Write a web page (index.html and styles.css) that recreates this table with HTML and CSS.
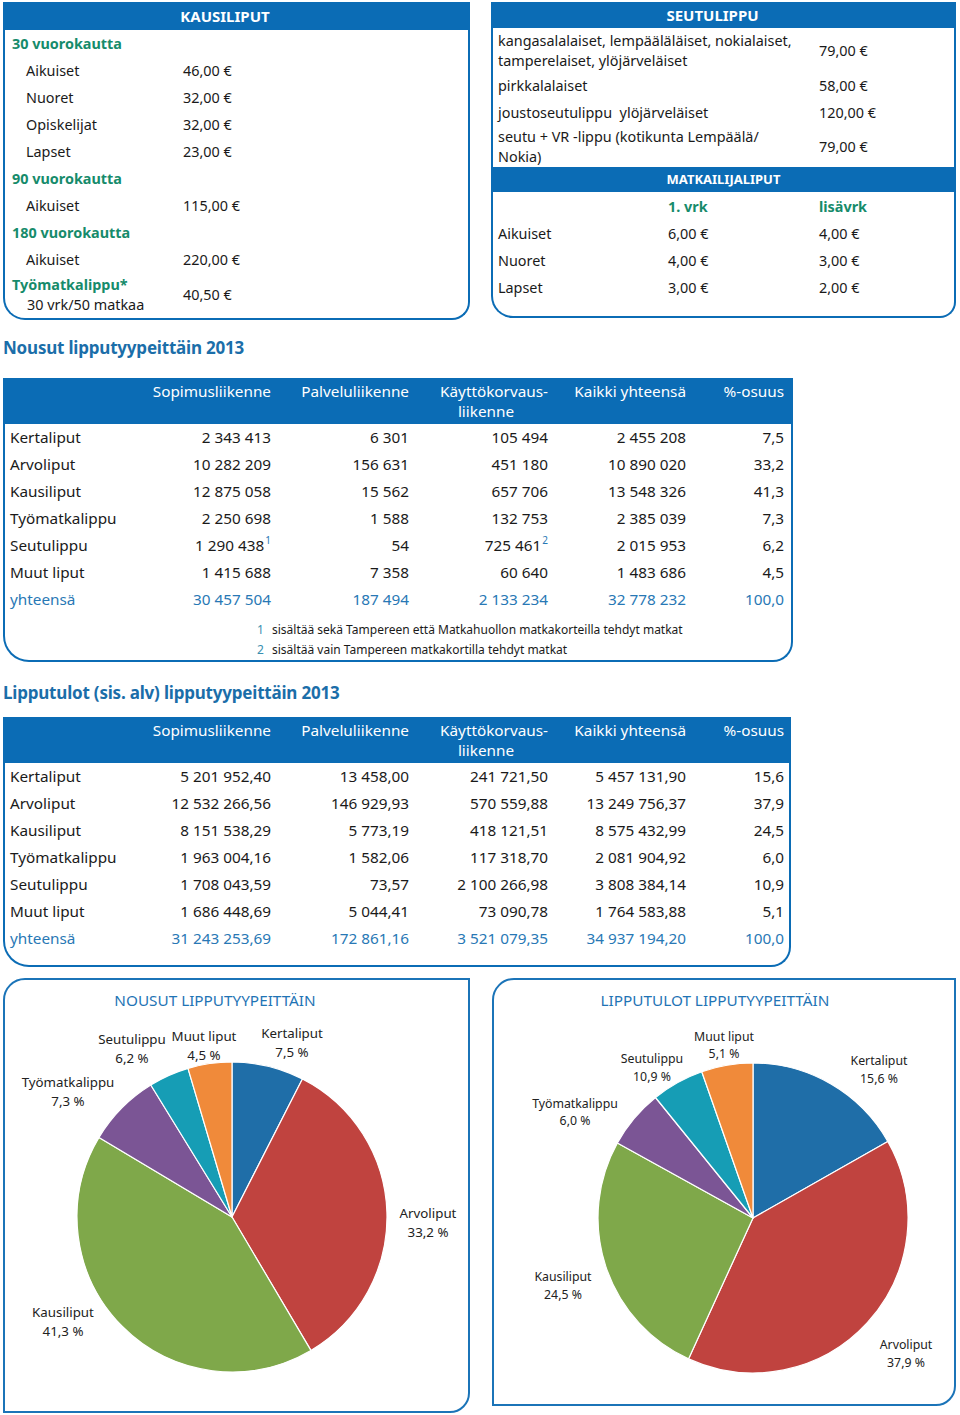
FILE: index.html
```html
<!DOCTYPE html>
<html lang="fi">
<head>
<meta charset="utf-8">
<title>Liput ja lipputulot 2013</title>
<link rel="stylesheet" href="styles.css">
</head>
<body>
<div class="page">

  <div class="top">
    <section class="box box-kausi">
      <h2 class="bar bar-kausi">KAUSILIPUT</h2>
      <div class="grp">30 vuorokautta</div>
      <div class="row"><span class="lbl">Aikuiset</span><span>46,00 €</span></div>
      <div class="row"><span class="lbl">Nuoret</span><span>32,00 €</span></div>
      <div class="row"><span class="lbl">Opiskelijat</span><span>32,00 €</span></div>
      <div class="row"><span class="lbl">Lapset</span><span>23,00 €</span></div>
      <div class="grp">90 vuorokautta</div>
      <div class="row"><span class="lbl">Aikuiset</span><span>115,00 €</span></div>
      <div class="grp">180 vuorokautta</div>
      <div class="row"><span class="lbl">Aikuiset</span><span>220,00 €</span></div>
      <div class="row row-last">
        <span class="stack"><span class="grp-in">Työmatkalippu*</span><span class="sub">30 vrk/50 matkaa</span></span>
        <span>40,50 €</span>
      </div>
    </section>

    <section class="box box-seutu">
      <h2 class="bar bar-seutu">SEUTULIPPU</h2>
      <div class="srow srow-a"><span>kangasalalaiset, lempääläläiset, nokialaiset,<br>tamperelaiset, ylöjärveläiset</span><span class="sval">79,00 €</span></div>
      <div class="srow"><span>pirkkalalaiset</span><span>58,00 €</span></div>
      <div class="srow"><span>joustoseutulippu&nbsp; ylöjärveläiset</span><span>120,00 €</span></div>
      <div class="srow srow-b"><span>seutu + VR -lippu (kotikunta Lempäälä/<br>Nokia)</span><span class="sval">79,00 €</span></div>
      <h3 class="bar bar-matk">MATKAILIJALIPUT</h3>
      <div class="mrow mhead"><span></span><span>1. vrk</span><span>lisävrk</span></div>
      <div class="mrow"><span>Aikuiset</span><span>6,00 €</span><span>4,00 €</span></div>
      <div class="mrow"><span>Nuoret</span><span>4,00 €</span><span>3,00 €</span></div>
      <div class="mrow"><span>Lapset</span><span>3,00 €</span><span>2,00 €</span></div>
    </section>
  </div>

  <h2 class="title title-1">Nousut lipputyypeittäin 2013</h2>
  <div class="tbl tbl-1">
    <div class="tr thead">
      <span></span>
      <span>Sopimusliikenne</span>
      <span>Palveluliikenne</span>
      <span class="kk">Käyttökorvaus-<br><span class="kk2">liikenne</span></span>
      <span>Kaikki yhteensä</span>
      <span>%-osuus</span>
    </div>
    <div class="tr"><span>Kertaliput</span><span>2 343 413</span><span>6 301</span><span>105 494</span><span>2 455 208</span><span>7,5</span></div>
    <div class="tr"><span>Arvoliput</span><span>10 282 209</span><span>156 631</span><span>451 180</span><span>10 890 020</span><span>33,2</span></div>
    <div class="tr"><span>Kausiliput</span><span>12 875 058</span><span>15 562</span><span>657 706</span><span>13 548 326</span><span>41,3</span></div>
    <div class="tr"><span>Työmatkalippu</span><span>2 250 698</span><span>1 588</span><span>132 753</span><span>2 385 039</span><span>7,3</span></div>
    <div class="tr"><span>Seutulippu</span><span>1 290 438<sup>1</sup></span><span>54</span><span>725 461<sup>2</sup></span><span>2 015 953</span><span>6,2</span></div>
    <div class="tr"><span>Muut liput</span><span>1 415 688</span><span>7 358</span><span>60 640</span><span>1 483 686</span><span>4,5</span></div>
    <div class="tr total"><span>yhteensä</span><span>30 457 504</span><span>187 494</span><span>2 133 234</span><span>32 778 232</span><span>100,0</span></div>
    <div class="notes">
      <p><span class="nn">1</span>sisältää sekä Tampereen että Matkahuollon matkakorteilla tehdyt matkat</p>
      <p><span class="nn">2</span>sisältää vain Tampereen matkakortilla tehdyt matkat</p>
    </div>
  </div>

  <h2 class="title title-2">Lipputulot (sis. alv) lipputyypeittäin 2013</h2>
  <div class="tbl tbl-2">
    <div class="tr thead">
      <span></span>
      <span>Sopimusliikenne</span>
      <span>Palveluliikenne</span>
      <span class="kk">Käyttökorvaus-<br><span class="kk2">liikenne</span></span>
      <span>Kaikki yhteensä</span>
      <span>%-osuus</span>
    </div>
    <div class="tr"><span>Kertaliput</span><span>5 201 952,40</span><span>13 458,00</span><span>241 721,50</span><span>5 457 131,90</span><span>15,6</span></div>
    <div class="tr"><span>Arvoliput</span><span>12 532 266,56</span><span>146 929,93</span><span>570 559,88</span><span>13 249 756,37</span><span>37,9</span></div>
    <div class="tr"><span>Kausiliput</span><span>8 151 538,29</span><span>5 773,19</span><span>418 121,51</span><span>8 575 432,99</span><span>24,5</span></div>
    <div class="tr"><span>Työmatkalippu</span><span>1 963 004,16</span><span>1 582,06</span><span>117 318,70</span><span>2 081 904,92</span><span>6,0</span></div>
    <div class="tr"><span>Seutulippu</span><span>1 708 043,59</span><span>73,57</span><span>2 100 266,98</span><span>3 808 384,14</span><span>10,9</span></div>
    <div class="tr"><span>Muut liput</span><span>1 686 448,69</span><span>5 044,41</span><span>73 090,78</span><span>1 764 583,88</span><span>5,1</span></div>
    <div class="tr total"><span>yhteensä</span><span>31 243 253,69</span><span>172 861,16</span><span>3 521 079,35</span><span>34 937 194,20</span><span>100,0</span></div>
  </div>

  <div class="charts">
    <section class="chart chart-1">
      <svg class="pie" width="463" height="431" viewBox="0 0 463 431">
        <text class="ctitle" x="210" y="20">NOUSUT LIPPUTYYPEITTÄIN</text>
        <g class="slices">
          <path fill="#1f6ea8" d="M227,237 L227,82 A155,155 0 0 1 297.4,98.9 Z"/>
          <path fill="#c0433f" d="M227,237 L297.4,98.9 A155,155 0 0 1 305.9,370.4 Z"/>
          <path fill="#7fa84a" d="M227,237 L305.9,370.4 A155,155 0 0 1 94.0,157.4 Z"/>
          <path fill="#7b5595" d="M227,237 L94.0,157.4 A155,155 0 0 1 145.8,105.0 Z"/>
          <path fill="#169db5" d="M227,237 L145.8,105.0 A155,155 0 0 1 183.0,88.4 Z"/>
          <path fill="#f08a3a" d="M227,237 L183.0,88.4 A155,155 0 0 1 227,82 Z"/>
        </g>
        <g class="lbl1">
          <text x="127" y="59">Seutulippu</text><text x="127" y="78">6,2 %</text>
          <text x="199" y="56">Muut liput</text><text x="199" y="75">4,5 %</text>
          <text x="287" y="53">Kertaliput</text><text x="287" y="72">7,5 %</text>
          <text x="63" y="102">Työmatkalippu</text><text x="63" y="121">7,3 %</text>
          <text x="423" y="233">Arvoliput</text><text x="423" y="252">33,2 %</text>
          <text x="58" y="332">Kausiliput</text><text x="58" y="351">41,3 %</text>
        </g>
      </svg>
    </section>
    <section class="chart chart-2">
      <svg class="pie" width="460" height="424" viewBox="0 0 460 424">
        <text class="ctitle" x="221" y="20">LIPPUTULOT LIPPUTYYPEITTÄIN</text>
        <g class="slices">
          <path fill="#1f6ea8" d="M259,238 L259,83 A155,155 0 0 1 393.8,161.4 Z"/>
          <path fill="#c0433f" d="M259,238 L393.8,161.4 A155,155 0 0 1 194.5,378.9 Z"/>
          <path fill="#7fa84a" d="M259,238 L194.5,378.9 A155,155 0 0 1 123.4,162.9 Z"/>
          <path fill="#7b5595" d="M259,238 L123.4,162.9 A155,155 0 0 1 161.5,117.5 Z"/>
          <path fill="#169db5" d="M259,238 L161.5,117.5 A155,155 0 0 1 207.8,91.7 Z"/>
          <path fill="#f08a3a" d="M259,238 L207.8,91.7 A155,155 0 0 1 259,83 Z"/>
        </g>
        <g class="lbl2">
          <text x="230" y="56">Muut liput</text><text x="230" y="73">5,1 %</text>
          <text x="158" y="78">Seutulippu</text><text x="158" y="96">10,9 %</text>
          <text x="385" y="80">Kertaliput</text><text x="385" y="98">15,6 %</text>
          <text x="81" y="123">Työmatkalippu</text><text x="81" y="140">6,0 %</text>
          <text x="69" y="296">Kausiliput</text><text x="69" y="314">24,5 %</text>
          <text x="412" y="364">Arvoliput</text><text x="412" y="382">37,9 %</text>
        </g>
      </svg>
    </section>
  </div>

</div>
</body>
</html>
```

FILE: styles.css
```css
* {
  box-sizing: border-box;
  margin: 0;
  padding: 0;
}

body {
  margin: 0;
  width: 960px;
  height: 1415px;
  overflow: hidden;
  background: #ffffff;
  color: #1a1a1a;
  font-family: "Noto Sans", "Open Sans", sans-serif;
  font-size: 14.4px;
}

.page {
  padding: 2px 0 0 3px;
}

/* ---------- top price boxes ---------- */
.top {
  display: flex;
  align-items: flex-start;
  gap: 21px;
}

.box {
  border: 2px solid #0b6cb5;
  border-top: 0;
}

.box-kausi {
  width: 467px;
  height: 318px;
  border-radius: 0 0 18px 22px;
}

.box-seutu {
  width: 465px;
  height: 316px;
  border-radius: 0 0 16px 22px;
}

.bar {
  background: #0b6cb5;
  color: #ffffff;
  font-weight: 700;
  text-align: center;
}

.bar-kausi {
  height: 28px;
  line-height: 29px;
  font-size: 15px;
  padding-right: 23px;
}

.bar-seutu {
  height: 26px;
  line-height: 26px;
  font-size: 15px;
  padding-right: 22px;
}

.bar-matk {
  height: 25px;
  line-height: 25px;
  font-size: 13px;
}

.grp {
  padding-left: 7px;
  line-height: 27px;
  color: #168b6b;
  font-weight: 700;
}

.row {
  display: grid;
  grid-template-columns: 178px auto;
  line-height: 27px;
}

.lbl {
  padding-left: 21px;
}

.row-last {
  align-items: center;
  padding: 2px 0 3px;
  line-height: 20px;
}

.stack {
  display: flex;
  flex-direction: column;
}

.grp-in {
  padding-left: 7px;
  color: #168b6b;
  font-weight: 700;
}

.sub {
  padding-left: 22px;
}

.srow {
  display: grid;
  grid-template-columns: 321px auto;
  padding-left: 5px;
  line-height: 27px;
}

.srow-a,
.srow-b {
  line-height: 20px;
  align-items: center;
}

.srow-a {
  padding-top: 3px;
  padding-bottom: 1px;
}

.srow-b {
  padding-top: 1px;
  padding-bottom: 0;
}

.mrow {
  display: grid;
  grid-template-columns: 170px 151px auto;
  padding-left: 5px;
  line-height: 27px;
}

.mhead {
  padding-top: 1px;
  color: #168b6b;
  font-weight: 700;
}

/* ---------- section titles ---------- */
.title {
  font-size: 17px;
  font-weight: 700;
  letter-spacing: -0.2px;
  line-height: 24px;
  color: #1b6ea9;
}

.title-1 {
  margin-top: 16px;
}

.title-2 {
  margin-top: 19px;
}

/* ---------- data tables ---------- */
.tbl {
  border: 2px solid #0b6cb5;
  border-top: 0;
  font-size: 15.3px;
}

.tbl-1 {
  width: 790px;
  margin-top: 18px;
  border-radius: 0 0 20px 26px;
}

.tbl-2 {
  width: 788px;
  margin-top: 12px;
  padding-bottom: 13px;
  border-radius: 0 0 20px 26px;
}

.tr {
  display: grid;
  grid-template-columns: 145px 121px 138px 139px 138px 98px;
  line-height: 27px;
  white-space: nowrap;
}

.tr > span {
  text-align: right;
}

.tr > span:first-child {
  text-align: left;
  padding-left: 5px;
}

.thead {
  height: 46px;
  padding-top: 3px;
  line-height: 20px;
  background: #0b6cb5;
  color: #ffffff;
}

.kk {
  display: flex;
  flex-direction: column;
  align-items: flex-end;
}

.kk br {
  display: none;
}

.kk2 {
  display: block;
  width: 110px;
  text-align: center;
  padding-right: 14px;
}

.total {
  color: #2878b5;
}

sup {
  font-size: 10px;
  line-height: 0;
  color: #2878b5;
  vertical-align: 7px;
  margin-left: 1px;
}

.notes {
  padding: 7px 0 0 252px;
  font-size: 12px;
  line-height: 20px;
}

.notes p {
  display: flex;
}

.nn {
  width: 15px;
  color: #3a8fb0;
}

/* ---------- pie charts ---------- */
.charts {
  display: flex;
  align-items: flex-start;
  gap: 22px;
  margin-top: 11px;
}

.chart {
  border: 2px solid #1b74b8;
  border-radius: 22px 0 20px 0;
}

.chart-1 {
  width: 467px;
  height: 435px;
}

.chart-2 {
  width: 464px;
  height: 428px;
}

.pie {
  display: block;
  font-family: "Noto Sans", "Open Sans", sans-serif;
}

.ctitle {
  font-size: 15.3px;
  fill: #1f74b5;
  text-anchor: middle;
  dominant-baseline: central;
}

.slices path {
  stroke: #ffffff;
  stroke-width: 1.2;
  stroke-linejoin: round;
}

.lbl1 text,
.lbl2 text {
  fill: #222222;
  text-anchor: middle;
  dominant-baseline: central;
}

.lbl1 text {
  font-size: 13.3px;
}

.lbl2 text {
  font-size: 12.3px;
}
```
